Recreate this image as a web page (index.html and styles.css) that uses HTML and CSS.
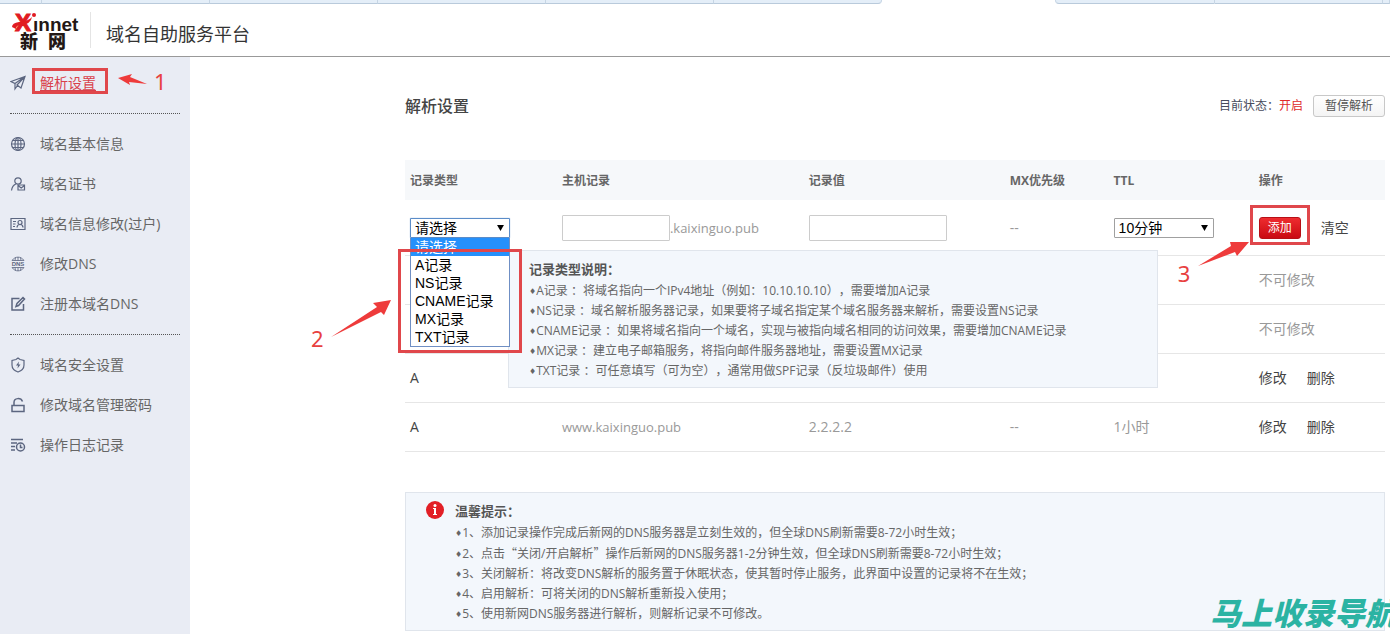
FILE: index.html
```html
<!DOCTYPE html>
<html lang="zh-CN">
<head>
<meta charset="utf-8">
<title>域名自助服务平台</title>
<link rel="stylesheet" href="styles.css">
</head>
<body>
<div class="tabs" aria-hidden="true">
  <div class="tab tab-first"></div><div class="tab"></div><div class="tab"></div><div class="tab"></div><div class="tab"></div><div class="tab tab-before"></div>
  <div class="tab-active"></div>
  <div class="tab tab-after"></div><div class="tab"></div><div class="tab tab-rest"></div>
</div>
<header class="header">
  <svg class="logo" width="68" height="52" viewBox="0 0 68 52" role="img" aria-label="Xinnet 新网">
    <text class="logo-x" x="4" y="27">X</text>
    <path d="M1 23 Q1 19 8 18 Q18 17 21 13 Q20 20 10 21 Q5 21 5 25 Z" fill="#e11b22"/>
    <circle cx="23" cy="11" r="2" fill="#e11b22"/>
    <text class="logo-en" x="22" y="27">ınnet</text>
    <text class="logo-cn" x="9" y="44">新</text>
    <text class="logo-cn" x="37" y="44">网</text>
  </svg>
  <h1 class="site-name">域名自助服务平台</h1>
</header>
<div class="layout">
  <nav class="sidebar">
    <a class="nav-item current" href="#">
      <svg class="icon" viewBox="0 0 16 16"><path d="M1 6.5 15 1.5 11 13 7 10 15 1.5 5 8.5ZM5 8.5V14L7.5 10.5"/></svg>
      <span>解析设置</span>
      <i class="mark mark-nav"></i>
      <svg class="arrow arrow-nav" width="30" height="14" viewBox="0 0 30 14"><path d="M0 4 14 0 12 3 29 10 11 8 12 11Z"/></svg>
      <b class="num num-nav">1</b>
    </a>
    <hr class="divider">
    <a class="nav-item" href="#">
      <svg class="icon" viewBox="0 0 16 16"><circle cx="8" cy="8" r="6.5"/><ellipse cx="8" cy="8" rx="3" ry="6.5"/><path d="M8 1.500V14.500M1.500 8H14.500M2.500 4.500H13.500M2.500 11.500H13.500"/></svg>
      <span>域名基本信息</span></a>
    <a class="nav-item" href="#">
      <svg class="icon" viewBox="0 0 16 16"><circle cx="8" cy="5" r="3.200"/><path d="M1.500 14.500C2 11 3.500 9 5.800 8M8 9H14.500V14H8ZM8 9.500 11.200 12 14.500 9.500"/></svg>
      <span>域名证书</span></a>
    <a class="nav-item" href="#">
      <svg class="icon" viewBox="0 0 16 16"><path d="M1 2.500H15V13.500H1ZM3 5.500H6M3 8H5.500M3 10.500H5M7 11.500C7 9.500 8.500 8.500 10 8.500S13 9.500 13 11.500"/><circle cx="10" cy="6.500" r="2"/></svg>
      <span>域名信息修改(过户)</span></a>
    <a class="nav-item" href="#">
      <svg class="icon icon-thin" viewBox="0 0 16 16"><path d="M2 4.500C5 0 11 0 14 4.500ZM2 11.500C5 16 11 16 14 11.500ZM8 1V4.500M5.500 1.500 5 4.500M10.500 1.500 11 4.500M8 11.500V15M5 11.500 5.500 14.500M11 11.500 10.500 14.500"/><text class="icon-dns" x="8" y="10" text-anchor="middle">DNS</text></svg>
      <span>修改DNS</span></a>
    <a class="nav-item" href="#">
      <svg class="icon icon-bold" viewBox="0 0 16 16"><path d="M9.500 2.500H2V14H13.500V8M6 10.500 7 7.500 13 1.500 14.500 3 8.500 9.500Z"/></svg>
      <span>注册本域名DNS</span></a>
    <hr class="divider">
    <a class="nav-item" href="#">
      <svg class="icon" viewBox="0 0 16 16"><path d="M8 1 10 2.500 14 3.500V8C14 11.500 11 14 8 15 5 14 2 11.500 2 8V3.500L6 2.500Z"/><path d="M9 4.500 6 8.500H8L7.500 11.500 10.500 7.500H8.500Z" fill="#5c6680" stroke="none"/></svg>
      <span>域名安全设置</span></a>
    <a class="nav-item" href="#">
      <svg class="icon icon-bold" viewBox="0 0 16 16"><path d="M2 8.500H14V14.500H2ZM4 8.500V5.500C4 .5 11 .5 12.500 4.500"/></svg>
      <span>修改域名管理密码</span></a>
    <a class="nav-item" href="#">
      <svg class="icon icon-bold" viewBox="0 0 16 16"><path d="M1 2.500H13M1 6H7M1 9.500H5M1 13H5"/><circle cx="10.500" cy="10" r="4"/><path d="M10.500 7.500V10.500H12.500"/></svg>
      <span>操作日志记录</span></a>
  </nav>
  <main class="main">
    <div class="title-row">
      <h2 class="title">解析设置</h2>
      <p class="status">目前状态：<em class="on">开启</em></p>
      <button class="btn-pause" type="button">暂停解析</button>
    </div>
    <table class="records">
      <colgroup><col class="c-type"><col class="c-host"><col class="c-value"><col class="c-mx"><col class="c-ttl"><col class="c-ops"></colgroup>
      <thead>
        <tr><th>记录类型</th><th>主机记录</th><th>记录值</th><th>MX优先级</th><th>TTL</th><th>操作</th></tr>
      </thead>
      <tbody>
        <tr class="edit-row">
          <td>
            <div class="picker">
              <select class="select select-open" aria-label="记录类型"><option>请选择</option></select>
              <svg class="caret" width="7" height="6" viewBox="0 0 8 7"><path d="M0 0H8L4 7Z"/></svg>
              <ul class="options" role="listbox" aria-label="记录类型">
                <li class="option selected" role="option" aria-selected="true">请选择</li>
                <li class="option" role="option">A记录</li>
                <li class="option" role="option">NS记录</li>
                <li class="option" role="option">CNAME记录</li>
                <li class="option" role="option">MX记录</li>
                <li class="option" role="option">TXT记录</li>
              </ul>
              <div class="tip">
                <h3 class="note-title">记录类型说明：</h3>
                <ul class="notes">
                  <li><span class="dot">♦</span>A记录 ：将域名指向一个IPv4地址（例如：10.10.10.10），需要增加A记录</li>
                  <li><span class="dot">♦</span>NS记录 ：域名解析服务器记录，如果要将子域名指定某个域名服务器来解析，需要设置NS记录</li>
                  <li><span class="dot">♦</span>CNAME记录 ：如果将域名指向一个域名，实现与被指向域名相同的访问效果，需要增加CNAME记录</li>
                  <li><span class="dot">♦</span>MX记录 ：建立电子邮箱服务，将指向邮件服务器地址，需要设置MX记录</li>
                  <li><span class="dot">♦</span>TXT记录 ：可任意填写（可为空），通常用做SPF记录（反垃圾邮件）使用</li>
                </ul>
              </div>
              <i class="mark mark-list"></i>
              <svg class="arrow arrow-list" width="60" height="38" viewBox="0 0 60 38"><path d="M60 0 53 15 50 12 0 37 46 7 42 3Z"/></svg>
              <b class="num num-list">2</b>
            </div>
          </td>
          <td><div class="host"><input class="field field-host" type="text" aria-label="主机记录"><span>.kaixinguo.pub</span></div></td>
          <td><input class="field field-value" type="text" aria-label="记录值"></td>
          <td>--</td>
          <td>
            <div class="picker">
              <select class="select" aria-label="TTL"><option>10分钟</option></select>
              <svg class="caret" width="7" height="6" viewBox="0 0 8 7"><path d="M0 0H8L4 7Z"/></svg>
            </div>
          </td>
          <td>
            <div class="ops">
              <button class="btn-add" type="button">添加</button><a href="#">清空</a>
              <i class="mark mark-add"></i>
              <svg class="arrow arrow-add" width="52" height="26" viewBox="0 0 52 26"><path d="M51 0 39 14 37 10 0 24 33 4 32 0Z"/></svg>
              <b class="num num-add">3</b>
            </div>
          </td>
        </tr>
        <tr><td></td><td></td><td></td><td></td><td></td><td>不可修改</td></tr>
        <tr><td></td><td></td><td></td><td></td><td></td><td>不可修改</td></tr>
        <tr><td class="type">A</td><td></td><td></td><td></td><td></td><td><div class="links"><a href="#">修改</a><a href="#">删除</a></div></td></tr>
        <tr><td class="type">A</td><td class="domain">www.kaixinguo.pub</td><td>2.2.2.2</td><td>--</td><td>1小时</td><td><div class="links"><a href="#">修改</a><a href="#">删除</a></div></td></tr>
      </tbody>
    </table>
    <section class="notice">
      <svg class="info" width="18" height="18" viewBox="0 0 18 18"><circle cx="9" cy="9" r="9" fill="#e21f26"/><path d="M7 7H10V13H11V14H7V13H8V8H7Z" fill="#fff"/><circle cx="9" cy="4.500" r="1.500" fill="#fff"/></svg>
      <div>
        <h3 class="note-title">温馨提示：</h3>
        <ul class="notes">
          <li><span class="dot">♦</span>1、添加记录操作完成后新网的DNS服务器是立刻生效的，但全球DNS刷新需要8-72小时生效；</li>
          <li><span class="dot">♦</span>2、点击<span class="quote">“</span>关闭/开启解析<span class="quote">”</span>操作后新网的DNS服务器1-2分钟生效，但全球DNS刷新需要8-72小时生效；</li>
          <li><span class="dot">♦</span>3、关闭解析：将改变DNS解析的服务置于休眠状态，使其暂时停止服务，此界面中设置的记录将不在生效；</li>
          <li><span class="dot">♦</span>4、启用解析：可将关闭的DNS解析重新投入使用；</li>
          <li><span class="dot">♦</span>5、使用新网DNS服务器进行解析，则解析记录不可修改。</li>
        </ul>
      </div>
      <div class="watermark">马上收录导航</div>
    </section>
  </main>
</div>
</body>
</html>
```
FILE: styles.css
```css
* { box-sizing: border-box; }
body {
  margin: 0;
  min-height: 100vh;
  display: flex;
  flex-direction: column;
  overflow-x: hidden;
  background: #fff;
  color: #666;
  font: 14px/20px "Open Sans", "Noto Sans CJK SC", sans-serif;
  text-spacing-trim: space-all;
}
h1, h2, h3, p, ul { margin: 0; padding: 0; }
ul { list-style: none; }
a { color: #444; text-decoration: none; }
button, select, input { font: inherit; margin: 0; }

.tabs { display: flex; height: 4px; }
.tab { width: 168px; background: #e4eef8; border-bottom: 1px solid #b9cadb; border-right: 1px solid #c6d5e4; }
.tab-first { width: 42px; }
.tab-before { border-bottom-right-radius: 4px; }
.tab-active { width: 173px; }
.tab-after { width: 160px; border-left: 1px solid #c6d5e4; border-bottom-left-radius: 4px; }
.tab-rest { flex: 1; }

.header { display: flex; align-items: center; height: 53px; padding-left: 11px; border-bottom: 1px solid #999; }
.logo { overflow: visible; }
.logo-x { font: bold 24px "Liberation Sans", sans-serif; fill: #e11b22; stroke: #e11b22; }
.logo-en { font: bold 19px "Liberation Sans", sans-serif; fill: #231815; }
.logo-cn { font: 900 18px "Noto Sans CJK SC", sans-serif; fill: #231815; }
.site-name { margin-left: 11px; padding: 10px 0 2px 15px; border-left: 1px solid #e4e4e4; font-size: 18px; font-weight: 400; line-height: 24px; color: #333; }

.layout { display: flex; flex: 1; }
.sidebar { flex: none; width: 190px; padding: 6px 10px; background: #e9ecf4; }
.nav-item { position: relative; display: flex; align-items: center; gap: 14px; height: 40px; color: #666; }
.current { color: #d9414b; }
.current span { text-decoration: underline; text-underline-offset: 2px; }
.icon { width: 16px; height: 16px; fill: none; stroke: #5c6680; stroke-width: 1.2; }
.icon-bold { stroke-width: 1.5; }
.icon-thin { stroke-width: 0.8; }
.icon-dns { font: bold 6px "Liberation Sans", sans-serif; fill: #5c6680; stroke: none; }
.divider { height: 0; margin: 10px 0; border: 0; border-top: 1px dotted #555; }

.main { flex: 1; min-width: 0; padding: 38px 5px 4px 215px; }
.title-row { display: flex; align-items: center; height: 22px; margin-bottom: 43px; }
.title { flex: 1; font-size: 16px; font-weight: 500; color: #444; }
.status { margin-right: 10px; font-size: 12px; color: #474b5c; }
.on { font-style: normal; color: #e02a2a; }
.btn-pause { width: 72px; height: 22px; padding: 0; border: 1px solid #c8c8c8; border-radius: 3px; background: linear-gradient(#fff, #f4f4f4); font-size: 12px; line-height: 20px; color: #555; }

.records { width: 100%; table-layout: fixed; border-collapse: separate; border-spacing: 0; }
.c-type { width: 15.5%; }
.c-host { width: 25.2%; }
.c-value { width: 20.5%; }
.c-mx { width: 10.6%; }
.c-ttl { width: 14.8%; }
.c-ops { width: 13.4%; }
.records th { height: 40px; padding: 2px 5px 0; background: #f6f8fa; font-size: 12px; font-weight: 700; text-align: left; color: #666; }
.records td { height: 49px; padding: 0 5px; border-bottom: 1px solid #e6e6e6; color: #999; }
.records .edit-row td { height: 56px; }
.records .type { color: #444; }
.records .domain { font-size: 13px; }

.picker { position: relative; width: 100px; }
.select { display: block; width: 100%; height: 20px; padding: 0 4px; appearance: none; border: 1px solid #a0a0a0; border-radius: 1px; background: #fff; font-family: "Liberation Sans", "Noto Sans CJK SC", sans-serif; line-height: 18px; color: #000; }
.select-open { border-color: #5b8cc8; box-shadow: 0 0 1px #5b8cc8; }
.caret { position: absolute; top: 7px; right: 6px; fill: #000; }
.options { position: absolute; z-index: 2; top: 20px; left: 0; width: 100px; border: 1px solid #6f8fc4; border-top: 0; background: #fff; font-family: "Liberation Sans", "Noto Sans CJK SC", sans-serif; color: #000; }
.option { height: 18px; padding-left: 4px; line-height: 18px; white-space: nowrap; }
.selected { background: #2590fb; color: #fff; }
.tip { position: absolute; z-index: 1; top: 32px; left: 98px; width: 650px; padding: 8px 20px 6px; border: 1px solid #e0e5ec; background: #f3f7fc; }
.note-title { margin-bottom: 2px; font-size: 13px; line-height: 20px; font-weight: 700; color: #555; }
.notes { font-size: 12px; line-height: 20px; color: #666; }
.notes li { white-space: nowrap; }
.dot { font: 8px "DejaVu Sans", sans-serif; vertical-align: 1px; }
.quote { font-family: "Noto Sans CJK SC", sans-serif; }

.host { display: flex; align-items: center; font-size: 13px; }
.field { display: block; height: 26px; padding: 0 4px; border: 1px solid #ccc; border-radius: 1px; background: #fff; }
.field-host { width: 108px; }
.field-value { width: 138px; }
.ops { position: relative; display: flex; align-items: center; gap: 20px; }
.links { display: flex; gap: 20px; }
.btn-add { width: 42px; height: 22px; padding: 0; border: 1px solid #b80f16; border-radius: 3px; background: linear-gradient(#ee2c2f, #c90a12); font-size: 12px; line-height: 20px; color: #fff; }

.mark { position: absolute; z-index: 3; border: 3px solid #e0474b; }
.arrow { position: absolute; z-index: 3; fill: #ee3b3b; }
.num { position: absolute; z-index: 3; font: 22px/24px "Noto Sans", sans-serif; color: #e8413f; }
.mark-nav { top: 5px; left: 22px; width: 76px; height: 26px; }
.arrow-nav { top: 11px; left: 108px; }
.num-nav { top: 6px; left: 144px; }
.mark-list { top: 31px; left: -12px; width: 124px; height: 104px; }
.arrow-list { top: 82px; left: -79px; }
.num-list { top: 108px; left: -99px; }
.mark-add { top: -12px; left: -9px; width: 60px; height: 40px; }
.arrow-add { top: 25px; left: -61px; }
.num-add { top: 44px; left: -81px; }

.notice { position: relative; display: flex; gap: 11px; margin-top: 40px; padding: 8px 20px 6px; border: 1px solid #e0e5ec; background: #f3f7fc; }
.info { flex: none; }
.watermark { position: absolute; right: -12px; bottom: -2px; font: italic 900 31px/40px "Noto Sans CJK SC", sans-serif; color: #2bb3a3; white-space: nowrap; }
```
